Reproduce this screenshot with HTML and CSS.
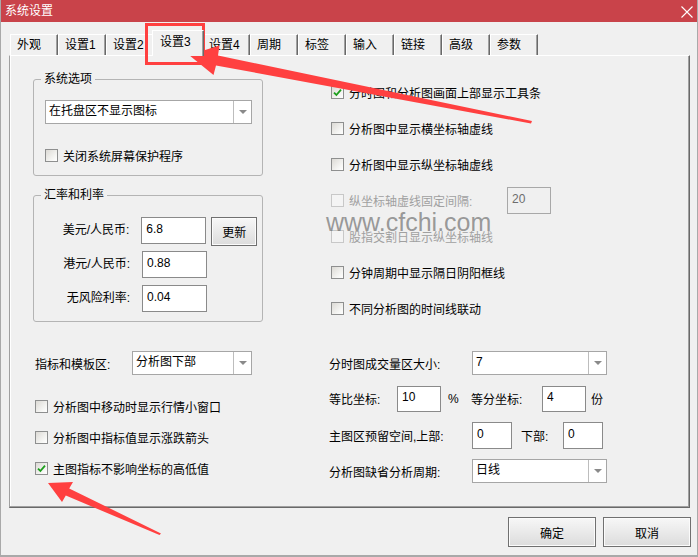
FILE: index.html
```html
<!DOCTYPE html>
<html lang="zh-CN">
<head>
    <meta charset="UTF-8">
    <title>系统设置</title>
    <link rel="stylesheet" href="styles.css">
</head>
<body>
    <div class="window">
        <div class="titlebar">
            <span class="title">系统设置</span>
            <svg class="close" width="12" height="12" viewBox="0 0 12 12">
                <path d="M0.5 0.5 L11.5 11.5 M11.5 0.5 L0.5 11.5" stroke="#fff" stroke-width="1.1" fill="none"/>
            </svg>
        </div>

        <div class="body">
            <div class="tabs">
                <div class="tab">外观</div>
                <div class="tab">设置1</div>
                <div class="tab">设置2</div>
                <div class="tab active">设置3</div>
                <div class="tab">设置4</div>
                <div class="tab">周期</div>
                <div class="tab">标签</div>
                <div class="tab">输入</div>
                <div class="tab">链接</div>
                <div class="tab">高级</div>
                <div class="tab">参数</div>
            </div>

            <div class="panel">
                <div class="panel-top">
                    <div class="col-left">
                        <fieldset class="group group-sys">
                            <legend>系统选项</legend>
                            <div class="combo combo-tray">
                                <span class="combo-text">在托盘区不显示图标</span>
                                <span class="combo-btn"><i class="caret"></i></span>
                            </div>
                            <div class="check check-saver">
                                <span class="box"></span>
                                <span>关闭系统屏幕保护程序</span>
                            </div>
                        </fieldset>

                        <fieldset class="group group-rate">
                            <legend>汇率和利率</legend>
                            <div class="rate-row">
                                <span class="rate-label">美元/人民币:</span>
                                <input class="field field-rate" type="text" value="6.8">
                                <button class="btn btn-refresh">更新</button>
                            </div>
                            <div class="rate-row">
                                <span class="rate-label">港元/人民币:</span>
                                <input class="field field-rate" type="text" value="0.88">
                            </div>
                            <div class="rate-row">
                                <span class="rate-label">无风险利率:</span>
                                <input class="field field-rate" type="text" value="0.04">
                            </div>
                        </fieldset>
                    </div>

                    <div class="col-right">
                        <div class="check opt">
                            <span class="box checked">
                                <svg width="11" height="11" viewBox="0 0 11 11"><path d="M2 5.6 L4.4 8 L9 2.6" stroke="#1c9e1c" stroke-width="1.8" fill="none"/></svg>
                            </span>
                            <span>分时图和分析图画面上部显示工具条</span>
                        </div>
                        <div class="check opt">
                            <span class="box"></span>
                            <span>分析图中显示横坐标轴虚线</span>
                        </div>
                        <div class="check opt">
                            <span class="box"></span>
                            <span>分析图中显示纵坐标轴虚线</span>
                        </div>
                        <div class="check opt disabled">
                            <span class="box"></span>
                            <span class="opt-label">纵坐标轴虚线固定间隔:</span>
                            <input class="field field-gap" type="text" value="20" disabled>
                        </div>
                        <div class="check opt disabled">
                            <span class="box"></span>
                            <span>股指交割日显示纵坐标轴线</span>
                        </div>
                        <div class="check opt">
                            <span class="box"></span>
                            <span>分钟周期中显示隔日阴阳框线</span>
                        </div>
                        <div class="check opt">
                            <span class="box"></span>
                            <span>不同分析图的时间线联动</span>
                        </div>
                    </div>
                </div>

                <div class="panel-bottom">
                    <div class="col-left bottom-left">
                        <div class="form-row">
                            <span class="lbl lbl-area">指标和模板区:</span>
                            <div class="combo combo-area">
                                <span class="combo-text">分析图下部</span>
                                <span class="combo-btn"><i class="caret"></i></span>
                            </div>
                        </div>
                        <div class="check low">
                            <span class="box"></span>
                            <span>分析图中移动时显示行情小窗口</span>
                        </div>
                        <div class="check low">
                            <span class="box"></span>
                            <span>分析图中指标值显示涨跌箭头</span>
                        </div>
                        <div class="check low">
                            <span class="box checked">
                                <svg width="11" height="11" viewBox="0 0 11 11"><path d="M2 5.6 L4.4 8 L9 2.6" stroke="#1c9e1c" stroke-width="1.8" fill="none"/></svg>
                            </span>
                            <span>主图指标不影响坐标的高低值</span>
                        </div>
                    </div>

                    <div class="col-right bottom-right">
                        <div class="form-row row-combo">
                            <span class="lbl lbl-long">分时图成交量区大小:</span>
                            <div class="combo combo-side">
                                <span class="combo-text">7</span>
                                <span class="combo-btn"><i class="caret"></i></span>
                            </div>
                        </div>
                        <div class="form-row row-field">
                            <span class="lbl lbl-ratio">等比坐标:</span>
                            <input class="field field-num" type="text" value="10">
                            <span class="unit unit-pct">%</span>
                            <span class="lbl lbl-split">等分坐标:</span>
                            <input class="field field-num" type="text" value="4">
                            <span class="unit unit-part">份</span>
                        </div>
                        <div class="form-row row-field">
                            <span class="lbl lbl-long">主图区预留空间,上部:</span>
                            <input class="field field-small" type="text" value="0">
                            <span class="lbl lbl-down">下部:</span>
                            <input class="field field-small" type="text" value="0">
                        </div>
                        <div class="form-row row-combo">
                            <span class="lbl lbl-long">分析图缺省分析周期:</span>
                            <div class="combo combo-side">
                                <span class="combo-text">日线</span>
                                <span class="combo-btn"><i class="caret"></i></span>
                            </div>
                        </div>
                    </div>
                </div>

                <div class="watermark">www.cfchi.com</div>
            </div>

            <div class="buttons">
                <button class="btn btn-main">确定</button>
                <button class="btn btn-main">取消</button>
            </div>
        </div>

        <!-- 标注：红框和箭头 -->
        <svg class="marks" width="698" height="557" viewBox="0 0 698 557">
            <rect x="146.5" y="24.5" width="57" height="39" fill="none" stroke="#ff4040" stroke-width="3"/>
            <polygon fill="#ff4040" points="189,55 219.5,45.5 218,55.5 532,121 531,123.5 216,65.5 213.5,75"/>
            <polygon fill="#ff4040" points="48,483 73,482 69.2,488.4 161,533.5 159.5,535 65.8,495.6 62,502"/>
        </svg>
    </div>
</body>
</html>
```

FILE: styles.css
```css
* {
    box-sizing: border-box;
}

body {
    margin: 0;
    font: 12px "Liberation Sans", "Noto Sans CJK SC", sans-serif;
    color: #000;
    background: #f0f0f0;
}

.window {
    position: relative;
    width: 698px;
    height: 557px;
    background: #f0f0f0;
    border-left: 1px solid #a9a9a9;
    border-right: 1px solid #a9a9a9;
    border-bottom: 2px solid #a9a9a9;
    overflow: hidden;
}

.titlebar {
    height: 22px;
    background: #c9434a;
    color: #fff;
    display: flex;
    align-items: center;
    justify-content: space-between;
    padding: 0 4px 0 4px;
    line-height: 22px;
}

.close {
    margin-top: 1px;
}

.body {
    padding: 12px 7px 0 8px;
}

/* 选项卡 */
.tabs {
    display: flex;
    align-items: flex-end;
    height: 21px;
    margin-left: 1px;
}

.tab {
    width: 48px;
    height: 21px;
    padding-left: 6px;
    line-height: 20px;
    border-top: 1px solid #fff;
    border-left: 1px solid #fff;
    border-right: 1px solid #696969;
    box-shadow: inset -1px 0 0 #a0a0a0;
    background: #f0f0f0;
    white-space: nowrap;
}

.tab.active {
    position: relative;
    z-index: 1;
    width: 52px;
    height: 26px;
    margin: 0 -2px -1px;
    padding-top: 1px;
    padding-left: 7px;
}

.panel {
    position: relative;
    height: 453px;
    border: 1px solid;
    border-color: #fff #696969 #696969 #a0a0a0;
    box-shadow: inset -1px -1px 0 #a0a0a0, inset 1px 0 0 #fff;
}

.panel-top,
.panel-bottom {
    display: grid;
    grid-template-columns: 230px 1fr;
    column-gap: 66px;
    padding-left: 23px;
}

.panel-top .col-left {
    padding-top: 15px;
}

.panel-top .col-right {
    padding-top: 18px;
}

.panel-bottom {
    margin-top: 25px;
}

/* 分组框 */
.group {
    margin: 0;
    border: 1px solid #b4b4b4;
    border-radius: 3px;
    min-width: 0;
}

.group legend {
    margin-left: -4px;
    padding: 0 3px;
    line-height: 16px;
}

.group-sys {
    padding: 13px 11px 12px;
}

.group-rate {
    margin-top: 11px;
    padding: 14px 5px 9px 11px;
}

.rate-row {
    display: flex;
    align-items: flex-start;
    height: 27px;
}

.rate-row + .rate-row {
    margin-top: 7px;
}

.rate-label {
    width: 85px;
    margin-right: 12px;
    text-align: right;
    line-height: 27px;
}

/* 下拉框 */
.combo {
    display: flex;
    height: 24px;
    background: #fff;
    border: 1px solid #a6a6a6;
}

.combo-text {
    flex: 1;
    padding-left: 3px;
    line-height: 21px;
    white-space: nowrap;
}

.combo-btn {
    width: 18px;
    border-left: 1px solid #bdbdbd;
    display: flex;
    align-items: center;
    justify-content: center;
}

.caret {
    width: 0;
    height: 0;
    border-left: 4px solid transparent;
    border-right: 4px solid transparent;
    border-top: 4px solid #8a8a8a;
}

.combo-tray {
    width: 207px;
}

.combo-area {
    width: 120px;
}

.combo-side {
    width: 135px;
}

/* 输入框 */
.field {
    font: inherit;
    color: #000;
    height: 27px;
    padding: 0 4px 3px;
    border: 1px solid #8a8a8a;
    background: #fff;
    outline: none;
}

.field-rate {
    width: 65px;
}

.field-gap {
    width: 44px;
    margin-left: 0;
    background: transparent;
    border-color: #a8a8a8;
    color: #6d6d6d;
}

.field-num {
    width: 44px;
    height: 26px;
}

.field-small {
    width: 40px;
}

/* 复选框 */
.check {
    display: flex;
    align-items: center;
    height: 16px;
    white-space: nowrap;
}

.box {
    width: 13px;
    height: 13px;
    margin-right: 5px;
    border: 1px solid #8e8f8f;
    background: linear-gradient(135deg, #dcdad5 0%, #f6f6f4 70%, #fff 100%);
    display: flex;
    align-items: center;
    justify-content: center;
    flex: none;
}

.check-saver {
    margin-top: 23px;
}

.opt {
    height: 36px;
    padding-left: 2px;
}

.opt-label {
    width: 158px;
}

.disabled {
    color: #a0a0a0;
}

.disabled .box {
    border-color: #c8c8c8;
    background: #f4f4f4;
}

/* 下半部分 */
.bottom-left {
    padding-left: 2px;
}

.form-row {
    display: flex;
    align-items: center;
    white-space: nowrap;
}

.lbl-area {
    width: 97px;
}

.low {
    margin-top: 15px;
}

.form-row + .low {
    margin-top: 23px;
}

.bottom-right {
    display: flex;
    flex-direction: column;
    gap: 10px;
}

.row-combo {
    height: 24px;
}

.row-field {
    height: 27px;
}

.lbl-long {
    width: 143px;
}

.lbl-ratio {
    width: 68px;
}

.unit-pct {
    width: 30px;
    padding-left: 7px;
}

.lbl-split {
    width: 71px;
}

.unit-part {
    padding-left: 5px;
}

.lbl-down {
    width: 51px;
    padding-left: 9px;
}

.watermark {
    position: absolute;
    left: 316px;
    top: 151px;
    font: 25px/30px "Liberation Sans", sans-serif;
    color: rgba(95, 95, 95, 0.62);
    pointer-events: none;
}

/* 按钮 */
.btn {
    font: inherit;
    color: #000;
    border: 1px solid #707070;
    background: linear-gradient(#f7f7f7, #dcdcdc);
    box-shadow: inset 0 0 0 1px #fbfbfb;
    padding: 0;
}

.btn-refresh {
    width: 46px;
    height: 29px;
    margin-left: 5px;
}

.buttons {
    display: flex;
    justify-content: flex-end;
    gap: 7px;
    margin-top: 9px;
    padding-right: 0;
    margin-right: -1px;
}

.btn-main {
    width: 88px;
    height: 30px;
}

.marks {
    position: absolute;
    left: -1px;
    top: 0;
    pointer-events: none;
}
```
